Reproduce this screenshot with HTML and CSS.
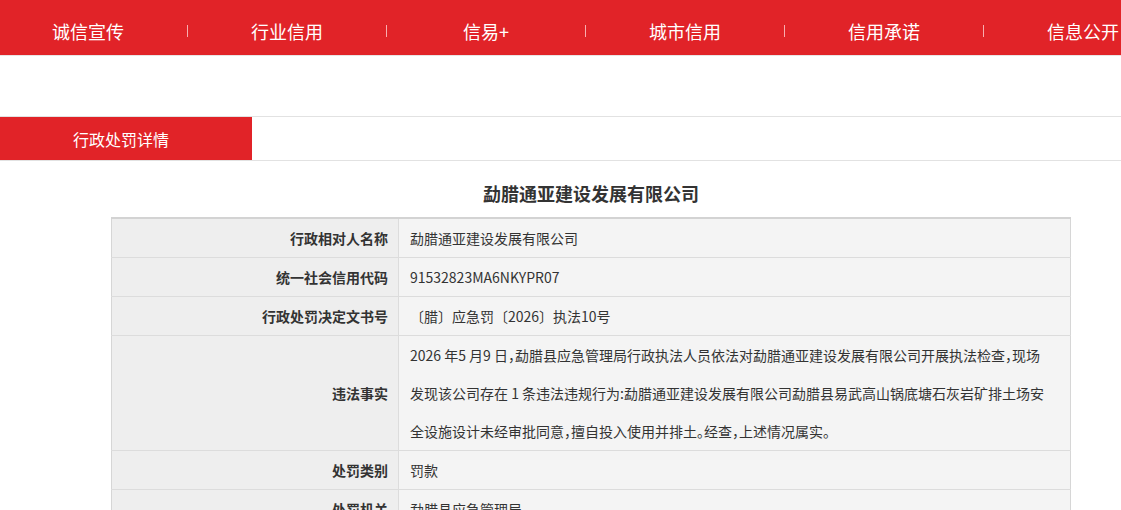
FILE: index.html
```html
<!DOCTYPE html>
<html lang="zh-CN">
<head>
<meta charset="utf-8">
<title>行政处罚详情</title>
<link rel="stylesheet" href="styles.css">
</head>
<body>
<nav class="nav">
  <a class="nav-link">诚信宣传</a><span class="sep"></span>
  <a class="nav-link">行业信用</a><span class="sep"></span>
  <a class="nav-link">信易+</a><span class="sep"></span>
  <a class="nav-link">城市信用</a><span class="sep"></span>
  <a class="nav-link">信用承诺</a><span class="sep"></span>
  <a class="nav-link">信息公开</a>
</nav>
<div class="tabbar">
  <div class="tab">行政处罚详情</div>
</div>
<main class="content">
  <h1 class="title">勐腊通亚建设发展有限公司</h1>
  <table class="detail">
    <tr><th>行政相对人名称</th><td>勐腊通亚建设发展有限公司</td></tr>
    <tr><th>统一社会信用代码</th><td>91532823MA6NKYPR07</td></tr>
    <tr><th>行政处罚决定文书号</th><td>〔腊〕应急罚〔2026〕执法10号</td></tr>
    <tr><th>违法事实</th><td><div class="fact">2026 年5 月9 日，勐腊县应急管理局行政执法人员依法对勐腊通亚建设发展有限公司开展执法检查，现场发现该公司存在 1 条违法违规行为:勐腊通亚建设发展有限公司勐腊县易武高山锅底塘石灰岩矿排土场安全设施设计未经审批同意，擅自投入使用并排土。经查，上述情况属实。</div></td></tr>
    <tr><th>处罚类别</th><td>罚款</td></tr>
    <tr><th>处罚机关</th><td>勐腊县应急管理局</td></tr>
  </table>
</main>
</body>
</html>
```

FILE: styles.css
```css
html, body {
  margin: 0;
  padding: 0;
  background: #fff;
  font-family: "Noto Sans CJK SC", "Microsoft YaHei", sans-serif;
  color: #333;
}

.nav {
  display: flex;
  align-items: center;
  height: 55px;
  background: #e12328;
  border-bottom: 1px solid #e9e4e4;
  white-space: nowrap;
  overflow: hidden;
}

.nav-link {
  flex: 0 0 176px;
  text-align: center;
  color: #fff;
  font-size: 18px;
  line-height: 24px;
  padding-top: 7px;
}

.sep {
  flex: 0 0 1px;
  height: 12px;
  margin: 7px 11px 0 11px;
  background: rgba(255, 220, 220, 0.75);
}

.tabbar {
  margin-top: 60px;
  height: 43px;
  border-top: 1px solid #e2e2e2;
  border-bottom: 1px solid #e2e2e2;
}

.tab {
  width: 179px;
  height: 43px;
  padding-left: 73px;
  background: #e12328;
  color: #fff;
  font-size: 16px;
  line-height: 44px;
}

.content {
  width: 960px;
  margin-left: 111px;
}

.title {
  margin: 0;
  padding: 20px 0 12px;
  font-size: 18px;
  line-height: 24px;
  font-weight: bold;
  text-align: center;
  color: #333;
}

.detail {
  width: 960px;
  border-collapse: collapse;
  border-top: 2px solid #d3d3d3;
  border-left: 1px solid #d6d6d6;
  border-right: 1px solid #d6d6d6;
  font-size: 14px;
}

.detail th,
.detail td {
  border-bottom: 1px solid #dcdcdc;
  line-height: 38px;
  padding: 0;
  vertical-align: middle;
}

.detail th {
  width: 276px;
  padding-right: 10px;
  border-right: 1px solid #dcdcdc;
  background: #eeeeee;
  text-align: right;
  font-weight: bold;
  color: #333;
}

.detail td {
  padding-left: 11px;
  padding-right: 12px;
  background: #f4f4f4;
  color: #333;
  text-align: left;
}

.fact {
  width: 640px;
  font-feature-settings: "halt";
}
```
